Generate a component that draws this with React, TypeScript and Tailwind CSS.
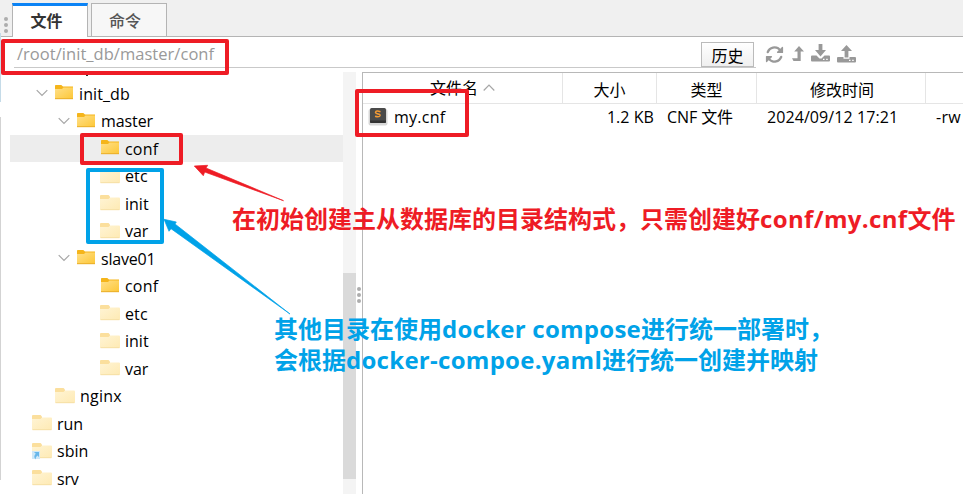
import React from "react";

const ui = "font-['Open_Sans','Noto_Sans_CJK_SC',sans-serif]";

type Node = {
  name: string;
  indent: string;
  tracking: string;
  open?: boolean;
  faded?: boolean;
  link?: boolean;
  selected?: boolean;
};

const nodes: Node[] = [
  { name: "init_db", indent: "pl-[26px]", tracking: "tracking-[0.1px]", open: true },
  { name: "master", indent: "pl-[48px]", tracking: "tracking-[-0.1px]", open: true },
  { name: "conf", indent: "pl-[90px]", tracking: "tracking-[0.2px]", selected: true },
  { name: "etc", indent: "pl-[90px]", tracking: "tracking-[0.1px]", faded: true },
  { name: "init", indent: "pl-[90px]", tracking: "tracking-[0px]", faded: true },
  { name: "var", indent: "pl-[90px]", tracking: "tracking-[-0.1px]", faded: true },
  { name: "slave01", indent: "pl-[48px]", tracking: "tracking-[-0.2px]", open: true },
  { name: "conf", indent: "pl-[90px]", tracking: "tracking-[0.2px]" },
  { name: "etc", indent: "pl-[90px]", tracking: "tracking-[0.1px]", faded: true },
  { name: "init", indent: "pl-[90px]", tracking: "tracking-[0px]", faded: true },
  { name: "var", indent: "pl-[90px]", tracking: "tracking-[-0.1px]", faded: true },
  { name: "nginx", indent: "pl-[45px]", tracking: "tracking-[0.2px]", faded: true },
  { name: "run", indent: "pl-[22px]", tracking: "tracking-[0px]", faded: true },
  { name: "sbin", indent: "pl-[22px]", tracking: "tracking-[0px]", faded: true, link: true },
  { name: "srv", indent: "pl-[22px]", tracking: "tracking-[-0.2px]", faded: true },
];

function Folder({ faded, link }: { faded?: boolean; link?: boolean }) {
  return (
    <svg width="20" height="18" viewBox="0 0 20 18" className="shrink-0">
      <defs>
        <linearGradient id="solid" x1="0" y1="0" x2="1" y2="1">
          <stop offset="0" stopColor="#ffe08a" />
          <stop offset="1" stopColor="#fdc736" />
        </linearGradient>
        <linearGradient id="pale" x1="0" y1="0" x2="1" y2="1">
          <stop offset="0" stopColor="#fff4d4" />
          <stop offset="1" stopColor="#feeab4" />
        </linearGradient>
      </defs>
      {faded ? (
        <>
          <path d="M0 2q0-1 1-1h7.500l1.500 1.500V5H0z" fill="#fbdf9d" />
          <path d="M0 5h8.500l1.500-1.500H19q1 0 1 1V15q0 1-1 1H1q-1 0-1-1z" fill="url(#pale)" />
          <path d="M.5 15.700h19" stroke="#f6dfa6" />
        </>
      ) : (
        <>
          <path d="M1 2q0-1 .7-1h5.600L9 2.500h10V5H1z" fill="#f5b51b" />
          <path d="M1 5h7l1.500-1.500H19V15H1z" fill="url(#solid)" />
          <path d="M1 14.700h18" stroke="#e9ae2b" />
        </>
      )}
      {link && (
        <>
          <path d="M0 9h8v8H0z" fill="#cfe8f8" />
          <path d="M2 10h5v5l-1.600-1.600Q3.500 15 3.500 17.500Q1 14.500 3.800 11.800z" fill="#68b7ea" />
        </>
      )}
    </svg>
  );
}

function TreeRow({ node }: { node: Node }) {
  return (
    <div className={`flex h-[27.5px] shrink-0 items-center ${node.indent} ${node.selected ? "bg-[#ededed]" : ""}`}>
      {node.open && (
        <svg width="12" height="8" viewBox="0 0 12 8" className="mr-[6px] shrink-0" fill="none" stroke="#a6a6a6" strokeWidth="1.200">
          <path d="M.7 1.200L6 6.500l5.300-5.300" />
        </svg>
      )}
      <Folder faded={node.faded} link={node.link} />
      <span className={`ml-[5px] pt-[2px] whitespace-pre text-base leading-[25px] ${node.tracking}`}>{node.name}</span>
    </div>
  );
}

function Tool({ up }: { up?: boolean }) {
  return (
    <svg width="19" height="18" viewBox="0 0 19 18" fill="#999">
      <path
        fillRule="evenodd"
        d={
          up
            ? "M1 12h5.500v1.700h6V12h5.500q1 0 1 1V16.500q0 1-1 1H1q-1 0-1-1V13q0-1 1-1zM12 14.700v1.300h1.500v-1.300zM15.200 14.700v1.300h1.500v-1.300z"
            : "M1 11.500h4.500l3 3h2l3-3h4.500q1 0 1 1V16.500q0 1-1 1H1q-1 0-1-1v-4q0-1 1-1zM12 14.700v1.300h1.500v-1.300zM15.200 14.700v1.300h1.500v-1.300z"
        }
      />
      {up ? <path d="M9.500 0L15 6h-3.600v6.500H7.600V6H4z" /> : <path d="M7.600 0h3.800v6H15l-5.500 6.500L4 6h3.600z" />}
    </svg>
  );
}

function Dots() {
  return (
    <div className="flex flex-col gap-[2px]">
      <i className="size-1 rounded-full bg-[#adadad]" />
      <i className="size-1 rounded-full bg-[#adadad]" />
      <i className="size-1 rounded-full bg-[#adadad]" />
    </div>
  );
}

function SublimeIcon() {
  return (
    <svg width="20" height="18" viewBox="0 0 20 18" className="shrink-0">
      <rect x=".5" y="1" width="19" height="16.500" rx="2" fill="#d7d7d7" />
      <rect x="2" y="0" width="16" height="15" rx="1.500" fill="#4b4b4b" />
      <path d="M2 12.500h16V14q0 1-1 1H3q-1 0-1-1z" fill="#333" />
      <path d="M12.500 3.700Q8 2.200 7.500 4.300q0 1.200 2.500 1.600Q12.500 6.300 12 7.800Q11.300 9.500 7 8.300" fill="none" stroke="#f39a35" strokeWidth="1.500" />
    </svg>
  );
}

export default function App() {
  return (
    <div className={`relative flex h-[494px] w-[963px] flex-col overflow-hidden bg-white text-base text-black ${ui}`}>
      <header className="flex h-[37px] shrink-0 items-end border-b border-[#b4b4b4] bg-[#f0f0f0]">
        <div className="flex w-3 justify-center pb-[3px]">
          <Dots />
        </div>
        <div className="mb-[-1px] flex h-[34px] w-[76px] justify-center border-x border-t-[3px] border-x-[#b4b4b4] border-t-[#0b83f5] bg-white pr-[7px] text-base leading-[31px] font-bold text-[#333]">
          文件
        </div>
        <div className="ml-[3px] flex h-[33px] w-[76px] justify-center border-x border-t border-[#b4b4b4] bg-[#f7f7f7] pr-[8px] text-base leading-[34px] font-medium text-[#555]">
          命令
        </div>
      </header>

      <div className="flex h-[35px] shrink-0 pl-[14px]">
        <div className="flex h-[31px] w-[742px] items-end justify-between border-b border-[#c9c9c9]">
          <span className="h-[25px] pl-[3px] text-[16.5px] leading-[24px] tracking-[0.04px] text-[#999]">/root/init_db/master/conf</span>
          <button className="mr-[2px] h-[25px] w-[53px] border border-[#bbb] bg-gradient-to-b from-white to-[#efefef] text-base leading-[26px]">历史</button>
        </div>
        <div className="flex items-start gap-[9px] pt-[8px] pl-[9px]">
          <svg width="19" height="19" viewBox="0 0 512 512" fill="#999">
            <path d="M105 203A160 160 0 0 1 369 143L327 185Q312 210 338 216H472Q488 216 488 200V66Q482 40 457 55L414 98A224 224 0 0 0 45 182Q38 211 66 223Q96 230 105 203zM39 296Q24 296 24 312V446Q30 472 55 457L98 414A224 224 0 0 0 467 330Q474 301 446 289Q416 282 407 309A160 160 0 0 1 143 369L185 327Q200 302 174 296z" />
          </svg>
          <svg width="12" height="18" viewBox="0 0 12 18" fill="#999" className="-ml-px">
            <path d="M7 1l5 5.500H8.700V16H1.500L0 13.300h5.500V6.500H2.200z" />
          </svg>
          <div className="-mt-px -ml-[2px] flex gap-[7px]">
            <Tool />
            <div className="mt-px">
              <Tool up />
            </div>
          </div>
        </div>
      </div>

      <main className="flex min-h-0 flex-1">
        <section className="w-[343px] overflow-hidden pl-[10px]">
          <div className="h-[7.5px] pl-[76px]">
            <i className="block h-[4px] w-[2px] bg-[#333]" />
          </div>
          {nodes.map((n, i) => (
            <TreeRow key={i} node={n} />
          ))}
        </section>
        <div className="w-[13px] bg-[#f4f4f4] pt-[201px]">
          <div className="h-[206px] bg-[#dadada]" />
        </div>
        <div className="flex w-[6px] justify-center pt-[215px]">
          <Dots />
        </div>
        <section className="min-w-0 flex-1 border-t border-l border-[#b8b8b8]">
          <div className="flex h-[31px] border-b border-[#e5e5e5] leading-[34px]">
            <div className="flex w-[200px] items-center justify-center border-r border-[#e5e5e5]">
              文件名
              <svg width="12" height="8" viewBox="0 0 12 8" className="ml-[5px]" fill="none" stroke="#a6a6a6" strokeWidth="1.200">
                <path d="M.7 6.500L6 1.200l5.300 5.300" />
              </svg>
            </div>
            <div className="w-[94px] border-r border-[#e5e5e5] text-center">大小</div>
            <div className="w-[100px] border-r border-[#e5e5e5] text-center">类型</div>
            <div className="w-[169px] border-r border-[#e5e5e5] pl-[2px] text-center">修改时间</div>
          </div>
          <div className="flex h-[27px] leading-[27px] whitespace-nowrap">
            <div className="flex w-[200px] items-center pl-[5px]">
              <div className="-mt-[2px]">
                <SublimeIcon />
              </div>
              <span className="ml-[6px] tracking-[0.25px]">my.cnf</span>
            </div>
            <div className="w-[94px] pr-[3px] text-right tracking-[0.05px]">1.2 KB</div>
            <div className="w-[100px] pl-[10px] tracking-[-0.1px]">CNF 文件</div>
            <div className="w-[169px] pl-[10px] tracking-[0.08px]">2024/09/12 17:21</div>
            <div className="pl-[10px] tracking-[0.3px]">-rw</div>
          </div>
        </section>
      </main>

      <div className="absolute top-[33px] left-0 h-[69px] w-px bg-[#c5dbe8]" />
      <div className="absolute top-[117px] left-0 h-[363px] w-px bg-[#d3d3d3]" />

      <div className="absolute top-[39px] left-[1px] h-[36px] w-[228px] rounded-[2px] border-4 border-[#ee1c25]" />
      <div className="absolute top-[133px] left-[80px] h-[32px] w-[103px] rounded-[2px] border-4 border-[#ee1c25]" />
      <div className="absolute top-[89px] left-[355px] h-[48px] w-[114px] rounded-[2px] border-4 border-[#ee1c25]" />
      <div className="absolute top-[168px] left-[86px] h-[76px] w-[78px] rounded-[2px] border-4 border-[#00a2e8]" />
      <svg className="absolute top-0 left-0" width="963" height="494">
        <path d="M194.300 166L207.700 165.300L206 168L283.500 200.700L204.700 172L203.300 175.700z" fill="#ee1c25" stroke="#ee1c25" strokeWidth=".7" />
        <path d="M164 219.300L176.300 222L175 224L290 314L171 228.700L169 231.300z" fill="#00a2e8" stroke="#00a2e8" strokeWidth=".7" />
      </svg>
      <p className="absolute top-[203px] left-[232px] text-2xl leading-[31px] font-bold whitespace-nowrap text-[#ee1c25]">
        在初始创建主从数据库的目录结构式，只需创建好<span className="tracking-[0.35px]">conf/my.cnf</span>文件
      </p>
      <p className="absolute top-[314px] left-[274px] text-2xl leading-[30.500px] font-bold whitespace-nowrap text-[#00a2e8]">
        其他目录在使用<span className="tracking-[0.25px]">docker compose</span>进行统一部署时，
        <br />
        会根据<span className="tracking-[0.28px]">docker-compoe.yaml</span>进行统一创建并映射
      </p>
    </div>
  );
}
